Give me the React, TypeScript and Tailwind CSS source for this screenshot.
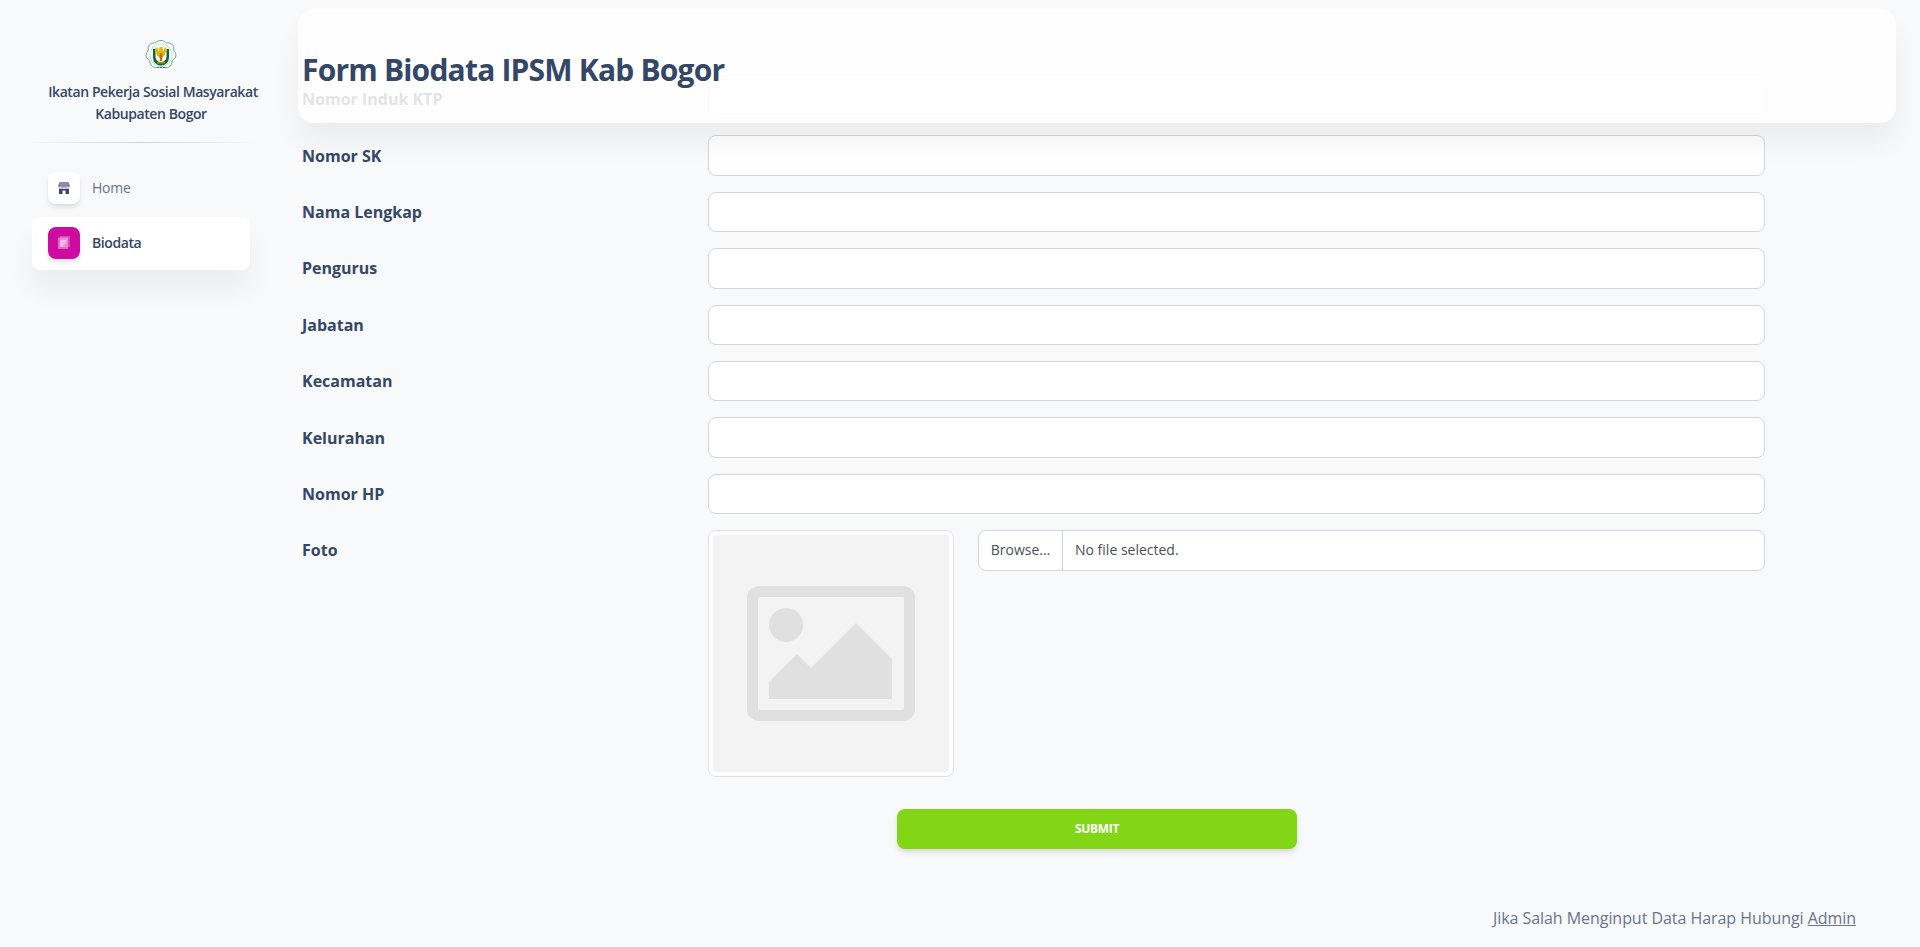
const FIELDS = ["Nomor Induk KTP", "Nomor SK", "Nama Lengkap", "Pengurus", "Jabatan", "Kecamatan", "Kelurahan", "Nomor HP"];

function Logo() {
  return (
    <svg viewBox="0 0 32 32" className="h-8 w-8">
      <path
        d="M16 .5c2.500 0 4 1.500 5.500 2.500 3-.5 6 .5 7 3.500.5 2 0 3 .5 4.500 1.500 1.500 2.500 3.500 1.500 6-.5 1.500-2 2.500-3 3.500-.5 3-2 6.500-5 7-2 .5-3.500-.5-6.500-.5s-4.500 1-6.500.5c-3-.5-4.500-4-5-7-1-1-2.500-2-3-3.500-1-2.500 0-4.500 1.500-6 .5-1.500 0-2.500.5-4.500 1-3 4-4 7-3.500C12 1.500 13.500.5 16 .5z"
        fill="#fff"
        stroke="#4fa577"
        strokeWidth="0.9"
      />
      <circle cx="16" cy="15" r="11" fill="none" stroke="#b7d9c4" strokeWidth="1.2" strokeDasharray="1.5 0.8" />
      <path d="M8 9h2.500v7.500a5.500 5.500 0 0 0 11 0V9H24v8.500a8 8 0 0 1-16 0z" fill="#0b6b38" />
      <path d="M10.500 7.500h2l1 4 1-4.500h3l1 4.500 1-4h2l-1.500 7.500-3 3h-2.500l-3-3z" fill="#e8b40e" />
      <path d="M14.800 13h2.400v8h-2.400z" fill="#b9720c" />
      <path d="M12 22h8v1.500h-8z" fill="#c98a12" />
      <path d="M12 27h2v1h-2zM15 27h2v1h-2zM18 27h2v1h-2z" fill="#2f8555" />
    </svg>
  );
}

function ShopIcon() {
  return (
    <svg viewBox="0 0 12 12" className="h-3 w-3">
      <path d="M1.500 0h9L12 3.200v1a1.400 1.400 0 0 1-2.800 0 1.600 1.600 0 0 1-3.200 0 1.600 1.600 0 0 1-3.200 0A1.400 1.400 0 0 1 0 4.200v-1z" fill="#3a416f" opacity="0.6" />
      <path d="M1 6.600c.6.2 1.400.2 2-.2.9.6 2.100.6 3 0 .9.6 2.100.6 3 0 .6.4 1.400.4 2 .2V12H7.500V8.500h-3V12H1z" fill="#3a416f" />
    </svg>
  );
}

function DocIcon() {
  return (
    <svg viewBox="0 0 12 13" className="h-[13px] w-3">
      <rect x="2" y="0" width="10" height="11" fill="#fff" opacity="0.25" />
      <path d="M0 1.500h10V13H0z" fill="#fff" opacity="0.4" />
      <path d="M2 4h6v3.500H5.500V11H2z" fill="#f7b5ea" />
    </svg>
  );
}

function Placeholder() {
  return (
    <svg viewBox="0 0 236 237" className="h-full w-full">
      <rect width="236" height="237" rx="3" fill="#f3f3f3" />
      <path
        fillRule="evenodd"
        d="M46 51h144a12 12 0 0 1 12 12v111a12 12 0 0 1-12 12H46a12 12 0 0 1-12-12V63a12 12 0 0 1 12-12zM47 62a2 2 0 0 0-2 2v109a2 2 0 0 0 2 2h142a2 2 0 0 0 2-2V64a2 2 0 0 0-2-2z"
        fill="#e0e0e0"
      />
      <circle cx="73" cy="90" r="17" fill="#e0e0e0" />
      <path d="M56 147l28-28 14 14 45-45 36 36v40H56z" fill="#e0e0e0" />
    </svg>
  );
}

export default function App() {
  return (
    <div className="h-screen overflow-hidden bg-[#f8f9fa] font-['Open_Sans',sans-serif] text-[#344767]">
      <div className="flex h-full w-[1912px] overflow-hidden">
        <aside className="w-[298px] shrink-0 pt-10">
          <div className="flex justify-center pl-[23px]">
            <Logo />
          </div>
          <div className="mt-[9px] ml-8 w-[242px] text-center text-sm font-semibold leading-[22.4px] tracking-[-0.42px]">
            <p>Ikatan Pekerja Sosial Masyarakat</p>
            <p className="pr-1">Kabupaten Bogor</p>
          </div>
          <div className="mt-[16px] ml-6 h-px w-[236px] bg-gradient-to-r from-transparent via-black/15 to-transparent" />
          <nav className="mt-[18.5px] ml-8 flex w-[218px] flex-col gap-[2.5px] text-sm">
            <a className="flex items-center rounded-lg px-4 py-[10.5px] tracking-[-0.2px] text-[#67748e]">
              <span className="mr-3 flex h-8 w-8 items-center justify-center rounded-lg bg-white shadow-[0_4px_6px_-1px_rgba(0,0,0,0.1),0_2px_4px_-1px_rgba(0,0,0,0.06)]">
                <ShopIcon />
              </span>
              Home
            </a>
            <a className="flex items-center rounded-lg bg-white px-4 pt-2.5 pb-[11px] font-semibold tracking-[-0.42px] shadow-[0_20px_27px_0_rgba(0,0,0,0.05)]">
              <span className="mr-3 flex h-8 w-8 items-center justify-center rounded-lg bg-[#cb0c9f] shadow-[0_4px_6px_-1px_rgba(0,0,0,0.1),0_2px_4px_-1px_rgba(0,0,0,0.06)]">
                <DocIcon />
              </span>
              <span className="pt-px">Biodata</span>
            </a>
          </nav>
        </aside>

        <main className="relative flex-1">
          <header className="absolute left-0 top-[9px] z-10 h-[114px] w-[1598px] rounded-2xl bg-white/85 px-1 pt-[42px] shadow-[0_20px_27px_0_rgba(0,0,0,0.05)]">
            <h1 className="text-[30px] font-bold leading-[37.5px] tracking-[-0.8px]">Form Biodata IPSM Kab Bogor</h1>
          </header>

          <form className="w-[1467px] pl-1 pt-[79px]">
            {FIELDS.map((field) => (
              <div key={field} className="mb-4 grid grid-cols-[406px_1057px]">
                <label className="flex h-[40.4px] items-center font-bold">{field}</label>
                <input
                  type="text"
                  className="h-[40.4px] w-full rounded-lg border border-[#d2d6da] bg-white px-3 text-sm text-[#495057]"
                />
              </div>
            ))}

            <div className="grid grid-cols-[406px_246px_1fr]">
              <label className="flex h-[40.4px] items-center font-bold">Foto</label>
              <div className="h-[247px] rounded-lg border border-[#dee2e6] bg-white p-1">
                <Placeholder />
              </div>
              <div className="ml-6 flex h-[40.4px] overflow-hidden rounded-lg border border-[#d2d6da] bg-white text-sm text-[#495057]">
                <button type="button" className="flex w-[84px] items-center justify-center border-r border-[#d2d6da]">
                  Browse...
                </button>
                <span className="flex items-center pl-3">No file selected.</span>
              </div>
            </div>

            <div className="mt-8 flex pl-[595px]">
              <button
                type="submit"
                className="h-10 w-[400px] rounded-lg bg-[#82d616] text-xs font-bold tracking-[-0.3px] text-white uppercase shadow-[0_4px_7px_-1px_rgba(0,0,0,0.11),0_2px_4px_-1px_rgba(0,0,0,0.07)]"
              >
                Submit
              </button>
            </div>
          </form>

          <p className="mt-[57px] w-[1558px] text-right tracking-[-0.05px] text-[#67748e]">
            Jika Salah Menginput Data Harap Hubungi <a className="underline">Admin</a>
          </p>
        </main>
      </div>
    </div>
  );
}
